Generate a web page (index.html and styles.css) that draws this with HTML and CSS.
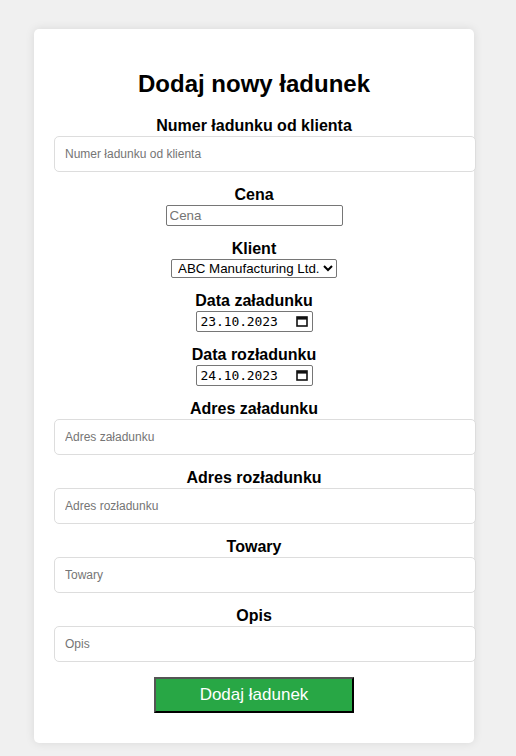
FILE: index.html
```html
<!DOCTYPE html>
<html lang="pl">
<head>
<meta charset="utf-8">
<title>Dodaj nowy ładunek</title>
<link rel="stylesheet" href="styles.css">
</head>
<body>
<div class="card">
  <h2 class="title">Dodaj nowy ładunek</h2>
  <form class="form">
    <div class="group">
      <label class="label">Numer ładunku od klienta</label>
      <input class="field" type="text" placeholder="Numer ładunku od klienta">
    </div>
    <div class="group">
      <label class="label">Cena</label>
      <input class="native price" type="text" placeholder="Cena">
    </div>
    <div class="group">
      <label class="label">Klient</label>
      <select class="native client">
        <option>ABC Manufacturing Ltd.</option>
      </select>
    </div>
    <div class="group">
      <label class="label">Data załadunku</label>
      <div class="date">
        <span class="date-text">23.10.2023</span>
        <svg class="cal" width="12" height="11" viewBox="0 0 12 11"><rect x="1" y="1" width="10" height="9" fill="none" stroke="#111" stroke-width="1.6"/><rect x="1" y="1" width="10" height="2.6" fill="#111"/></svg>
      </div>
    </div>
    <div class="group">
      <label class="label">Data rozładunku</label>
      <div class="date">
        <span class="date-text">24.10.2023</span>
        <svg class="cal" width="12" height="11" viewBox="0 0 12 11"><rect x="1" y="1" width="10" height="9" fill="none" stroke="#111" stroke-width="1.6"/><rect x="1" y="1" width="10" height="2.6" fill="#111"/></svg>
      </div>
    </div>
    <div class="group">
      <label class="label">Adres załadunku</label>
      <input class="field" type="text" placeholder="Adres załadunku">
    </div>
    <div class="group">
      <label class="label">Adres rozładunku</label>
      <input class="field" type="text" placeholder="Adres rozładunku">
    </div>
    <div class="group">
      <label class="label">Towary</label>
      <input class="field" type="text" placeholder="Towary">
    </div>
    <div class="group">
      <label class="label">Opis</label>
      <input class="field" type="text" placeholder="Opis">
    </div>
    <button class="submit" type="button">Dodaj ładunek</button>
  </form>
</div>
</body>
</html>
```

FILE: styles.css
```css
html, body {
  margin: 0;
  background: #f0f0f0;
}
body {
  padding: 29px 8px 20px 0;
  font-family: "Liberation Sans", Arial, sans-serif;
  color: #000;
}
.card {
  width: 400px;
  margin: 0 auto;
  padding: 20px;
  background: #fff;
  border-radius: 5px;
  box-shadow: 0 0 10px rgba(0, 0, 0, 0.1);
  text-align: center;
}
.title {
  font-size: 24px;
  font-weight: bold;
  margin: 21px 0 20px;
  line-height: 27px;
}
.form {
  display: flex;
  flex-direction: column;
  align-items: center;
}
.group {
  width: 100%;
  display: flex;
  flex-direction: column;
  align-items: center;
  margin-bottom: 14px;
}
.label {
  display: block;
  font-size: 16px;
  font-weight: bold;
  line-height: 18px;
  height: 18px;
  margin-bottom: 1px;
}
.field {
  box-sizing: content-box;
  align-self: flex-start;
  width: 100%;
  padding: 10px;
  height: 14px;
  border: 1px solid #ddd;
  border-radius: 5px;
  font-family: "Liberation Sans", Arial, sans-serif;
  font-size: 12px;
  margin: 0;
  outline: none;
}
.field::placeholder {
  color: #757575;
}
.native {
  box-sizing: border-box;
  font-family: "Liberation Sans", Arial, sans-serif;
  font-size: 13.33px;
  margin: 0;
}
.price {
  width: 177px;
  height: 21px;
  padding: 1px 3px;
  border: 1px solid #767676;
  border-radius: 2px;
}
.price::placeholder {
  color: #757575;
}
.client {
  width: 166px;
  height: 19px;
  padding: 0 0 0 2px;
  border: 1px solid #767676;
  border-radius: 2px;
  background: #fff;
  color: #000;
}
.date {
  box-sizing: border-box;
  width: 117px;
  height: 21px;
  border: 1px solid #767676;
  border-radius: 2px;
  display: flex;
  align-items: center;
  justify-content: space-between;
  padding: 0 4px 0 4px;
}
.date-text {
  font-family: "DejaVu Sans Mono", monospace;
  font-size: 13px;
  letter-spacing: -0.1px;
}
.cal {
  display: block;
}
.submit {
  margin-top: 1px;
  margin-bottom: 10px;
  width: 200px;
  height: 36px;
  background: #28a745;
  color: #fff;
  font-family: "Liberation Sans", Arial, sans-serif;
  font-size: 17px;
  border-style: solid;
  border-width: 2px;
  border-color: #555 #000 #000 #555;
  padding: 0;
}
```
